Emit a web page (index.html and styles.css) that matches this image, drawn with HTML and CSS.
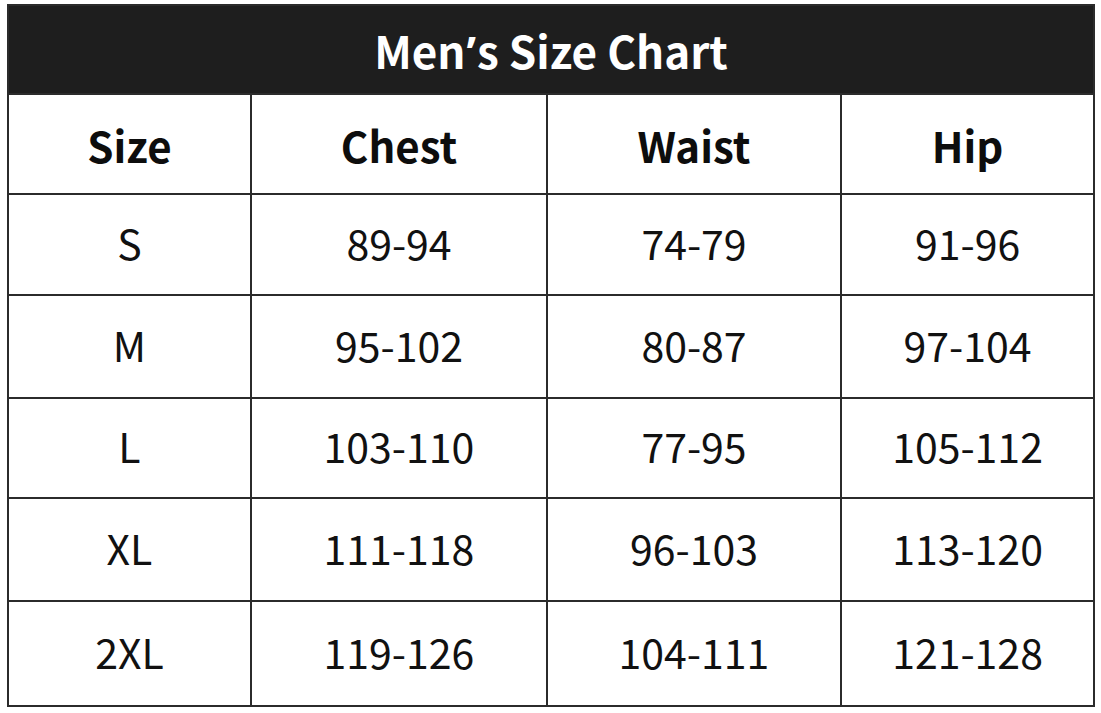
FILE: index.html
```html
<!DOCTYPE html>
<html lang="en">
<head>
<meta charset="utf-8">
<title>Men’s Size Chart</title>
<link rel="stylesheet" href="styles.css">
</head>
<body>
<table class="chart">
  <colgroup>
    <col class="c-size">
    <col class="c-chest">
    <col class="c-waist">
    <col class="c-hip">
  </colgroup>
  <thead>
    <tr class="title-row"><th colspan="4" class="title">Men<span class="apos">’</span>s Size Chart</th></tr>
    <tr class="head-row"><th>Size</th><th>Chest</th><th>Waist</th><th>Hip</th></tr>
  </thead>
  <tbody>
    <tr class="r1"><td>S</td><td>89-94</td><td>74-79</td><td>91-96</td></tr>
    <tr class="r2"><td>M</td><td>95-102</td><td>80-87</td><td>97-104</td></tr>
    <tr class="r3"><td>L</td><td>103-110</td><td>77-95</td><td>105-112</td></tr>
    <tr class="r4"><td>XL</td><td>111-118</td><td>96-103</td><td>113-120</td></tr>
    <tr class="r5"><td>2XL</td><td>119-126</td><td>104-111</td><td>121-128</td></tr>
  </tbody>
</table>
</body>
</html>
```
FILE: styles.css
```css
html, body {
  margin: 0;
  padding: 0;
  background: #ffffff;
}

body {
  padding: 4px 0 0 7px;
  font-family: "Noto Sans CJK SC", "Noto Sans", sans-serif;
  color: #111111;
}

.chart {
  width: 1086px;
  border-collapse: collapse;
  table-layout: fixed;
  border: 2px solid #2b2b2b;
}

.c-size { width: 243px; }
.c-chest { width: 296px; }
.c-waist { width: 294px; }
.c-hip { width: 253px; }

.chart th,
.chart td {
  border: 2px solid #2b2b2b;
  text-align: center;
  vertical-align: middle;
  padding: 0;
}

.title {
  background: #1e1e1e;
  color: #ffffff;
  height: 87px;
  font-size: 44px;
  font-weight: 700;
  padding: 0 6px 2px 0;
}

.apos {
  font-family: "Noto Sans", "DejaVu Sans", sans-serif;
  font-weight: 700;
  padding: 0 1px;
}

.head-row th {
  height: 98px;
  font-size: 42px;
  font-weight: 700;
  color: #0d0d0d;
}

.chart td {
  font-size: 41px;
  font-weight: 400;
  color: #111111;
  padding-bottom: 6px;
}

.r1 td { height: 93px; }
.r2 td { height: 95px; }
.r3 td { height: 92px; }
.r4 td { height: 95px; }
.r5 td { height: 97px; }
```
